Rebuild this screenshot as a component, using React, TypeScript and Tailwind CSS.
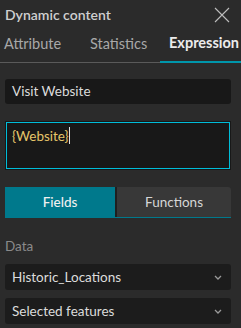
import React from "react";

export default function App() {
  return (
    <div className="w-[241px] h-[328px] bg-[#2b2b2b] text-[#d4d4d4] overflow-hidden" style={{ fontFamily: "Lato, 'Noto Sans', sans-serif" }}>
      <div className="flex items-center justify-between h-[29px] pl-[5px] pr-[11px]">
        <span className="text-[14px] text-[#d0d0d0] font-semibold">Dynamic content</span>
        <svg width="16" height="16" viewBox="0 0 16 16" className="text-[#bdbdbd]">
          <path d="M1 1 L15 15 M15 1 L1 15" stroke="currentColor" strokeWidth="1.1" fill="none" />
        </svg>
      </div>
      <div className="flex items-end h-[34px] border-b border-[#5a5a5a] relative">
        <div className="w-[84px] pl-[4px] pb-[7px] text-[14.5px] text-[#a8a8a8]">Attribute</div>
        <div className="w-[76px] pl-[6px] pb-[7px] text-[14.5px] text-[#a8a8a8] whitespace-nowrap">Statistics</div>
        <div className="flex-1 pl-[9px] pb-[7px] text-[14.5px] font-bold text-[#ebebeb] border-b-2 border-[#0096ab] -mb-[1px]">Expression</div>
      </div>
      <div className="pl-[5px] pr-[10px] pt-[16px] flex flex-col">
        <div className="h-[25px] rounded-[3px] bg-[#181818] flex items-center pl-[7px] text-[13.5px] text-[#dcdcdc]">Visit Website</div>
        <div className="mt-[17px] h-[49px] border border-[#181818] bg-[#181818]">
          <div className="h-full border border-[#00bcd8] pl-[5px] pt-[3px] text-[13.5px] text-[#e6c66a] flex items-start">
            <span>{"{Website}"}</span><span className="inline-block w-[1px] h-[17px] bg-[#e0e0e0] mt-[1px]"></span>
          </div>
        </div>
        <div className="mt-[17px] flex h-[31px] border-b border-[#00798c]">
          <div className="w-[112px] bg-[#00798c] flex items-center justify-center text-[13.5px] text-[#f0f0f0] font-medium border-r-2 border-[#1f1f1f]">Fields</div>
          <div className="flex-1 bg-[#383838] flex items-center justify-center text-[13.5px] text-[#d6d6d6] rounded-tr-[3px]">Functions</div>
        </div>
        <div className="mt-[18px] text-[13.5px] text-[#8a8a8a]">Data</div>
        <div className="mt-[8px] h-[26px] rounded-[3px] bg-[#1c1c1c] flex items-center justify-between pl-[7px] pr-[9px] text-[13.5px] text-[#dcdcdc]">
          <span>Historic_Locations</span>
          <svg width="8" height="5" viewBox="0 0 8 5"><path d="M1 1 L4 4 L7 1" stroke="#9a9a9a" strokeWidth="1.3" fill="none" /></svg>
        </div>
        <div className="mt-[8px] h-[26px] rounded-[3px] bg-[#1c1c1c] flex items-center justify-between pl-[7px] pr-[9px] text-[13.5px] text-[#dcdcdc]">
          <span>Selected features</span>
          <svg width="8" height="5" viewBox="0 0 8 5"><path d="M1 1 L4 4 L7 1" stroke="#9a9a9a" strokeWidth="1.3" fill="none" /></svg>
        </div>
      </div>
    </div>
  );
}
